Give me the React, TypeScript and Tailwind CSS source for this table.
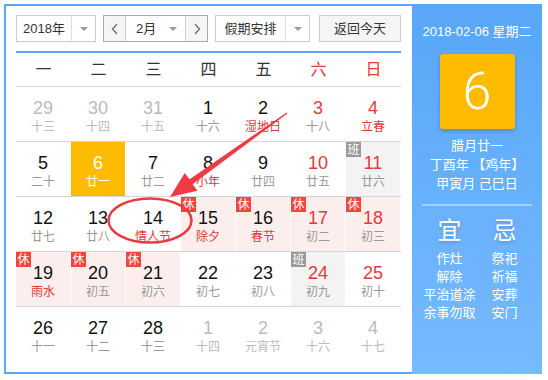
import React from "react";

type Day = {
  d: number;
  l: string;
  muted?: boolean;
  redNum?: boolean;
  redLunar?: boolean;
  tag?: "休" | "班";
  today?: boolean;
};

const WEEK = ["一", "二", "三", "四", "五", "六", "日"];

const ROWS: Day[][] = [
  [
    { d: 29, l: "十三", muted: true },
    { d: 30, l: "十四", muted: true },
    { d: 31, l: "十五", muted: true },
    { d: 1, l: "十六" },
    { d: 2, l: "湿地日", redLunar: true },
    { d: 3, l: "十八", redNum: true },
    { d: 4, l: "立春", redNum: true, redLunar: true },
  ],
  [
    { d: 5, l: "二十" },
    { d: 6, l: "廿一", today: true },
    { d: 7, l: "廿二" },
    { d: 8, l: "小年", redLunar: true },
    { d: 9, l: "廿四" },
    { d: 10, l: "廿五", redNum: true },
    { d: 11, l: "廿六", redNum: true, tag: "班" },
  ],
  [
    { d: 12, l: "廿七" },
    { d: 13, l: "廿八" },
    { d: 14, l: "情人节", redLunar: true },
    { d: 15, l: "除夕", redLunar: true, tag: "休" },
    { d: 16, l: "春节", redLunar: true, tag: "休" },
    { d: 17, l: "初二", redNum: true, tag: "休" },
    { d: 18, l: "初三", redNum: true, tag: "休" },
  ],
  [
    { d: 19, l: "雨水", redLunar: true, tag: "休" },
    { d: 20, l: "初五", tag: "休" },
    { d: 21, l: "初六", tag: "休" },
    { d: 22, l: "初七" },
    { d: 23, l: "初八" },
    { d: 24, l: "初九", redNum: true, tag: "班" },
    { d: 25, l: "初十", redNum: true },
  ],
  [
    { d: 26, l: "十一" },
    { d: 27, l: "十二" },
    { d: 28, l: "十三" },
    { d: 1, l: "十四", muted: true },
    { d: 2, l: "元宵节", muted: true },
    { d: 3, l: "十六", muted: true },
    { d: 4, l: "十七", muted: true },
  ],
];

const YI = ["作灶", "解除", "平治道涂", "余事勿取"];
const JI = ["祭祀", "祈福", "安葬", "安门"];

function Caret() {
  return (
    <span className="h-0 w-0 border-x-[4px] border-t-[4px] border-x-transparent border-t-[#999]" />
  );
}

function Chevron({ dir }: { dir: "left" | "right" }) {
  return (
    <svg width="8" height="12" viewBox="0 0 8 12" fill="none">
      <path
        d={dir === "left" ? "M6 1L1.5 6L6 11" : "M2 1L6.5 6L2 11"}
        stroke="#666"
        strokeWidth="1.2"
      />
    </svg>
  );
}

function Controls() {
  return (
    <div className="flex h-[27px] text-[13px] text-[#333]">
      <div className="flex w-[80px] border border-[#ccc] bg-white">
        <div className="flex flex-1 items-center justify-center">2018年</div>
        <div className="flex w-[24px] items-center justify-center border-l border-[#ddd]">
          <Caret />
        </div>
      </div>

      <div className="ml-[7px] flex w-[105px] border border-[#aaa] bg-white">
        <div className="flex w-[22px] items-center justify-center border-r border-[#ccc] bg-[#f5f5f5]">
          <Chevron dir="left" />
        </div>
        <div className="flex flex-1 items-center justify-between pl-[10px] pr-[8px]">
          <span>2月</span>
          <Caret />
        </div>
        <div className="flex w-[22px] items-center justify-center border-l border-[#ccc] bg-[#f5f5f5]">
          <Chevron dir="right" />
        </div>
      </div>

      <div className="ml-[7px] flex w-[95px] border border-[#ccc] bg-white">
        <div className="flex flex-1 items-center justify-center">假期安排</div>
        <div className="flex w-[24px] items-center justify-center border-l border-[#ddd]">
          <Caret />
        </div>
      </div>

      <div className="ml-[9px] flex w-[82px] items-center justify-center border border-[#ccc] bg-[#f5f5f5]">
        返回今天
      </div>
    </div>
  );
}

function Cell({ day }: { day: Day }) {
  let bg = "bg-white";
  if (day.today) bg = "bg-[#ffbb00]";
  else if (day.tag === "休") bg = "bg-[#fdeeee]";
  else if (day.tag === "班") bg = "bg-[#f3f3f3]";

  let numColor = "text-[#111]";
  if (day.muted) numColor = "text-[#bbb]";
  else if (day.today) numColor = "text-white";
  else if (day.redNum) numColor = "text-[#e4393c]";

  let lunarColor = "text-[#999]";
  if (day.muted) lunarColor = "text-[#bbb]";
  else if (day.today) lunarColor = "text-white";
  else if (day.redLunar) lunarColor = "text-[#e4393c]";

  return (
    <div
      className={`relative flex h-[54px] flex-col items-center border-r border-white pt-[11px] ${bg}`}
    >
      {day.tag && (
        <span
          className={`absolute left-0 top-0 flex h-[15px] w-[15px] items-center justify-center text-[12px] leading-none text-white ${
            day.tag === "休" ? "bg-[#f2453d]" : "bg-[#999]"
          }`}
        >
          {day.tag}
        </span>
      )}
      <span className={`font-['Liberation_Sans',Arial,sans-serif] text-[18px] leading-[20px] ${numColor}`}>
        {day.d}
      </span>
      <span className={`mt-px text-[12px] leading-[16px] ${lunarColor}`}>{day.l}</span>
    </div>
  );
}

function Annotation() {
  return (
    <svg
      className="pointer-events-none absolute left-0 top-0"
      width="548"
      height="380"
      viewBox="0 0 548 380"
    >
      <polygon
        points="170,197 197.5,190.7 192.6,184.3 287.4,113.6 286.6,112.4 189.6,179.3 184.7,172.9"
        fill="#ef3b44"
      />
      <ellipse cx="150" cy="220.5" rx="41.5" ry="22" fill="none" stroke="#ea3a40" strokeWidth="2.5" />
    </svg>
  );
}

function SidePanel() {
  return (
    <div className="flex w-[130px] flex-col items-center bg-gradient-to-b from-[#58a6f7] to-[#76baff] pt-[19px] text-white">
      <div className="text-[13px] leading-[18px]">
        <span className="font-['Liberation_Sans',Arial,sans-serif]">2018-02-06</span> 星期二
      </div>
      <div className="mt-[13px] flex h-[75px] w-[75px] items-center justify-center rounded-[3px] bg-[#ffbb00] shadow-[0_2px_4px_rgba(0,0,0,0.2)]">
        <span className="font-['Roboto',Arial,sans-serif] text-[52px] font-light leading-none">6</span>
      </div>
      <div className="mt-[7px] flex flex-col items-center text-[13px] leading-[19px]">
        <span>腊月廿一</span>
        <span>丁酉年 【鸡年】</span>
        <span>甲寅月 己巳日</span>
      </div>
      <div className="mt-[11px] h-[2px] w-[110px] bg-white/40" />
      <div className="grid w-[110px] grid-cols-2">
        <div className="flex flex-col items-center">
          <span className="mt-[10px] text-[24px] leading-[30px] [text-shadow:0_2px_3px_rgba(0,0,0,0.15)]">宜</span>
          <div className="mt-[4px] flex flex-col items-center text-[13px] leading-[18px]">
            {YI.map((t) => (
              <span key={t}>{t}</span>
            ))}
          </div>
        </div>
        <div className="flex flex-col items-center">
          <span className="mt-[10px] text-[24px] leading-[30px] [text-shadow:0_2px_3px_rgba(0,0,0,0.15)]">忌</span>
          <div className="mt-[4px] flex flex-col items-center text-[13px] leading-[18px]">
            {JI.map((t) => (
              <span key={t}>{t}</span>
            ))}
          </div>
        </div>
      </div>
    </div>
  );
}

export default function App() {
  return (
    <div className="relative h-[380px] w-[548px] bg-white pl-[4px] pt-[4px] font-['Liberation_Sans','Noto_Sans_CJK_SC',sans-serif]">
      <div className="flex h-[370px] w-[538px]">
        <div className="w-[408px] border-y-2 border-l-2 border-[#5aa9f8] pl-[10px] pr-[11px] pt-[9px]">
          <Controls />
          <div className="mt-[9px] h-[2px] bg-[#5aa9f8]" />
          <div className="grid h-[33px] grid-cols-7 items-center text-[16px] text-[#333]">
            {WEEK.map((w, i) => (
              <span key={w} className={`text-center ${i >= 5 ? "text-[#e4393c]" : ""}`}>
                {w}
              </span>
            ))}
          </div>
          {ROWS.map((row, r) => (
            <div key={r} className="grid grid-cols-7 border-t border-[#d4d4d4]">
              {row.map((day, i) => (
                <Cell key={i} day={day} />
              ))}
            </div>
          ))}
        </div>
        <SidePanel />
      </div>
      <Annotation />
    </div>
  );
}
